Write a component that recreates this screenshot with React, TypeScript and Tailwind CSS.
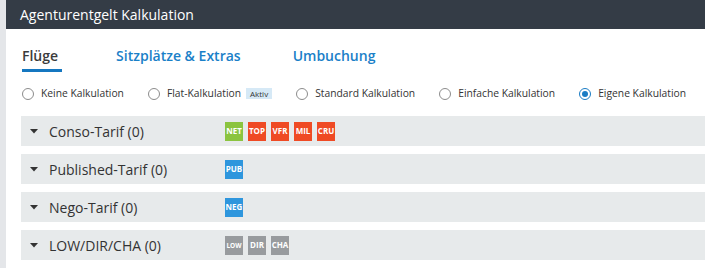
import { useState } from 'react';

type Tarif = {
  title: string;
  badges: { label: string; color: string; small?: boolean }[];
};

const tarife: Tarif[] = [
  {
    title: 'Conso-Tarif (0)',
    badges: [
      { label: 'NET', color: 'bg-[#8bc43f]' },
      { label: 'TOP', color: 'bg-[#ef4a24]' },
      { label: 'VFR', color: 'bg-[#ef4a24]' },
      { label: 'MIL', color: 'bg-[#ef4a24]' },
      { label: 'CRU', color: 'bg-[#ef4a24]' },
    ],
  },
  { title: 'Published-Tarif (0)', badges: [{ label: 'PUB', color: 'bg-[#2e96dd]' }] },
  { title: 'Nego-Tarif (0)', badges: [{ label: 'NEG', color: 'bg-[#2e96dd]' }] },
  {
    title: 'LOW/DIR/CHA (0)',
    badges: [
      { label: 'LOW', color: 'bg-[#989b9e]', small: true },
      { label: 'DIR', color: 'bg-[#989b9e]' },
      { label: 'CHA', color: 'bg-[#989b9e]' },
    ],
  },
];

const modes = [
  'Keine Kalkulation',
  'Flat-Kalkulation',
  'Standard Kalkulation',
  'Einfache Kalkulation',
  'Eigene Kalkulation',
];

function Radio({ checked }: { checked: boolean }) {
  return (
    <span
      className={
        checked
          ? 'flex h-[12px] w-[12px] shrink-0 items-center justify-center rounded-full border border-[#1a7cc4] bg-white'
          : 'flex h-[12px] w-[12px] shrink-0 items-center justify-center rounded-full border border-[#8c8c8c] bg-white'
      }
    >
      {checked && <span className="h-[6px] w-[6px] rounded-full bg-[#1a7cc4]" />}
    </span>
  );
}

export default function App() {
  const [mode, setMode] = useState(4);

  return (
    <div
      className="flex h-[268px] w-[705px] overflow-hidden bg-white"
      style={{ fontFamily: '"Open Sans", "Liberation Sans", sans-serif' }}
    >
      {/* left gutter */}
      <div className="w-[6px] shrink-0 bg-[#e4e6e9]" />

      <div className="flex flex-1 flex-col">
        {/* Header */}
        <div className="flex h-[29px] items-center bg-[#343c46] pl-[14px] text-[14px] text-white">
          Agenturentgelt Kalkulation
        </div>

        {/* Tabs */}
        <div className="mt-[16px] flex pl-[16px] text-[14px] font-semibold">
          <div className="border-b-[3px] border-[#1577c0] pr-[4px] pb-[3px] text-[#3b3b3b]">Flüge</div>
          <div className="ml-[54px] text-[#1a80c8]">Sitzplätze &amp; Extras</div>
          <div className="ml-[52px] text-[#1a80c8]">Umbuchung</div>
        </div>

        {/* Radios */}
        <div className="mt-[14px] flex items-center gap-[24px] pl-[16px] text-[10.3px] text-[#333]">
          {modes.map((m, i) => (
            <label key={m} className="flex cursor-pointer items-center gap-[7px]" onClick={() => setMode(i)}>
              <Radio checked={mode === i} />
              <span>{m}</span>
              {i === 1 && (
                <span className="-ml-[2px] bg-[#d6e9f6] px-[4px] text-[8px] leading-[11px] text-[#333]">
                  Aktiv
                </span>
              )}
            </label>
          ))}
        </div>

        {/* Tarif rows */}
        <div className="mt-[15px] flex flex-col gap-[8px] pl-[15px]">
          {tarife.map((t) => (
            <div key={t.title} className="flex h-[30px] items-center bg-[#e7eaeb] pl-[9px]">
              <svg width="8" height="5" viewBox="0 0 8 5" className="shrink-0">
                <path d="M0 0h8L4 4.5z" fill="#333" />
              </svg>
              <div className="ml-[11px] w-[176px] shrink-0 text-[14px] text-[#333]">
                {t.title}
              </div>
              <div className="flex gap-[5px]">
                {t.badges.map((b) => (
                  <span
                    key={b.label}
                    className={`${b.color} ${b.small ? 'text-[6.5px]' : 'text-[8px]'} flex h-[19px] w-[18px] items-center justify-center font-bold text-white`}
                  >
                    {b.label}
                  </span>
                ))}
              </div>
            </div>
          ))}
        </div>
      </div>
    </div>
  );
}
